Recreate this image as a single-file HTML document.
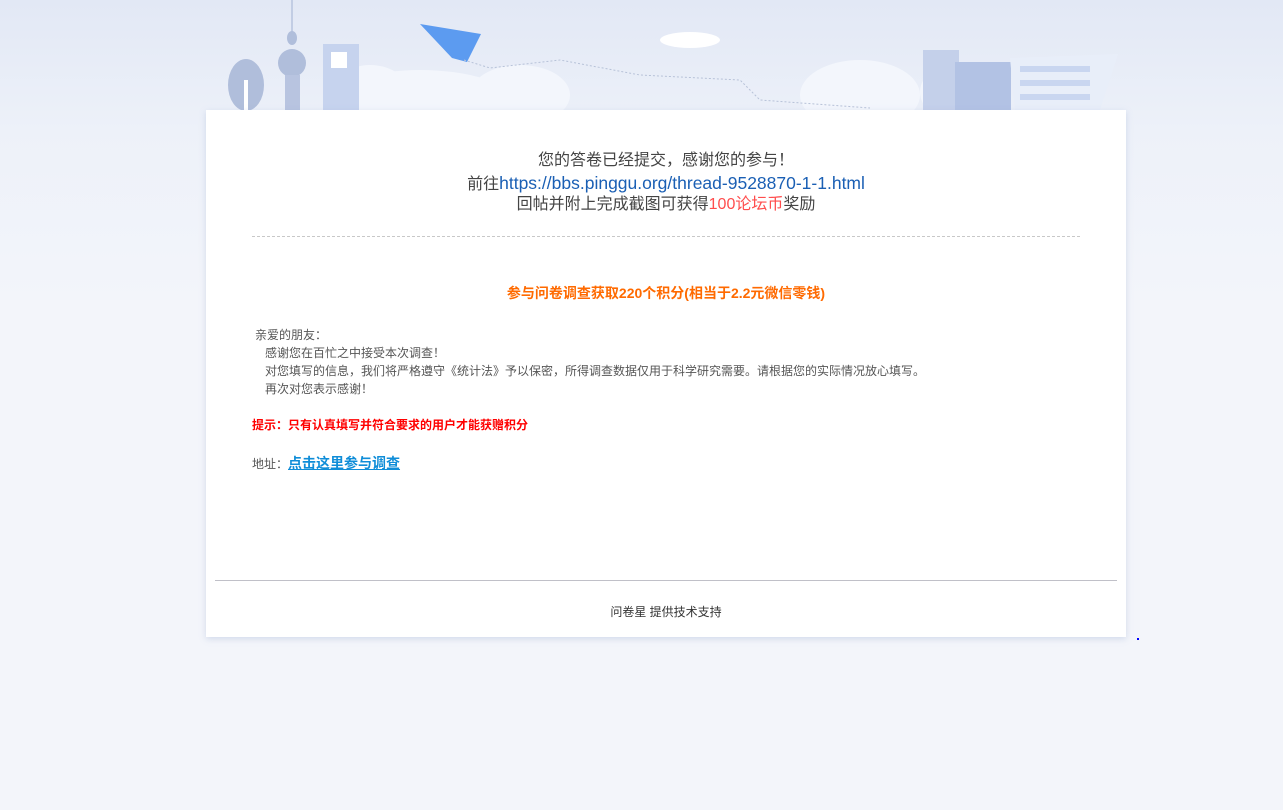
<!DOCTYPE html>
<html><head><meta charset="utf-8"><style>
body{margin:0;width:1283px;height:810px;overflow:hidden;background:linear-gradient(#e2e8f5 0,#edf1f9 130px,#f3f5fa 300px,#f3f5fa 100%);font-family:"Liberation Sans","Noto Sans CJK SC",sans-serif;position:relative}
.card{position:absolute;left:206px;top:110px;width:920px;height:527px;background:#fff;box-shadow:0 2px 6px rgba(150,170,210,.35)}
.t{position:absolute;left:0;width:100%;text-align:center;font-size:16px;color:#444;top:40px}
.t div{height:22px;line-height:22px}
.dash{position:absolute;left:46px;width:828px;top:126px;border-top:1px dashed #c8c8c8}
.or{position:absolute;left:0;width:920px;text-align:center;top:173px;font-size:14px;font-weight:bold;color:#ff6a00}
.body{position:absolute;left:49px;top:216px;font-size:12px;color:#555;line-height:18px}
.red{position:absolute;left:46px;top:306px;font-size:12px;font-weight:bold;color:#f00}
.addr{position:absolute;left:46px;top:343px;font-size:12px;color:#555}
.addr a{color:#0f8dd8;font-weight:bold;font-size:14px;text-decoration:underline}
.fl{position:absolute;left:9px;width:902px;top:470px;border-top:1px solid #c0c0c8}
.ft{position:absolute;left:0;width:920px;text-align:center;top:493px;font-size:12px;color:#333}
</style></head><body>
<svg width="1283" height="112" style="position:absolute;left:0;top:0">
<g fill="#f3f6fc"><ellipse cx="420" cy="100" rx="90" ry="30"/><ellipse cx="520" cy="95" rx="50" ry="30"/><ellipse cx="370" cy="95" rx="40" ry="30"/><ellipse cx="860" cy="95" rx="60" ry="35"/><ellipse cx="960" cy="92" rx="40" ry="30"/></g>
<ellipse cx="690" cy="40" rx="30" ry="8" fill="#fff"/>
<ellipse cx="246" cy="85" rx="18" ry="26" fill="#b0bedb"/>
<rect x="244" y="80" width="4" height="30" fill="#fff"/>
<rect x="291" y="0" width="2" height="40" fill="#c2cde4"/>
<ellipse cx="292" cy="38" rx="5" ry="7" fill="#b0bedb"/>
<ellipse cx="292" cy="63" rx="14" ry="14" fill="#b0bedb"/>
<rect x="285" y="75" width="15" height="35" fill="#b8c4e0"/>
<rect x="323" y="44" width="36" height="66" fill="#c6d3ee"/>
<rect x="331" y="52" width="16" height="16" fill="#fff"/>
<polygon points="420,24 481,34 467,62 452,58" fill="#5c9bf0"/>
<polyline points="464,60 490,68 560,60 640,75 740,80 760,100 870,108" fill="none" stroke="#b7c2d8" stroke-dasharray="2,2"/>
<rect x="923" y="50" width="36" height="60" fill="#c4d0ea"/>
<rect x="955" y="62" width="56" height="48" fill="#b2c2e4"/>
<polygon points="1010,58 1118,54 1100,110 1015,110" fill="#e8eef9"/>
<g fill="#c9d6f0"><rect x="1020" y="66" width="70" height="6"/><rect x="1020" y="80" width="70" height="6"/><rect x="1020" y="94" width="70" height="6"/></g>
</svg>
<div class="card">
<div class="t"><div>您的答卷已经提交，感谢您的参与！</div><div>前往<span style="color:#1a5fb4;font-size:17.5px">https://bbs.pinggu.org/thread-9528870-1-1.html</span></div><div>回帖并附上完成截图可获得<span style="color:#ff4d4d">100论坛币</span>奖励</div></div>
<div class="dash"></div>
<div class="or">参与问卷调查获取220个积分(相当于2.2元微信零钱)</div>
<div class="body">亲爱的朋友：<br>&nbsp;&nbsp;&nbsp;感谢您在百忙之中接受本次调查！<br>&nbsp;&nbsp;&nbsp;对您填写的信息，我们将严格遵守《统计法》予以保密，所得调查数据仅用于科学研究需要。请根据您的实际情况放心填写。<br>&nbsp;&nbsp;&nbsp;再次对您表示感谢！</div>
<div class="red">提示：只有认真填写并符合要求的用户才能获赠积分</div>
<div class="addr">地址：<a>点击这里参与调查</a></div>
<div class="fl"></div>
<div class="ft">问卷星 提供技术支持</div>
</div>
<div style="position:absolute;left:1137px;top:638px;width:2px;height:2px;background:#00f"></div>
</body></html>
